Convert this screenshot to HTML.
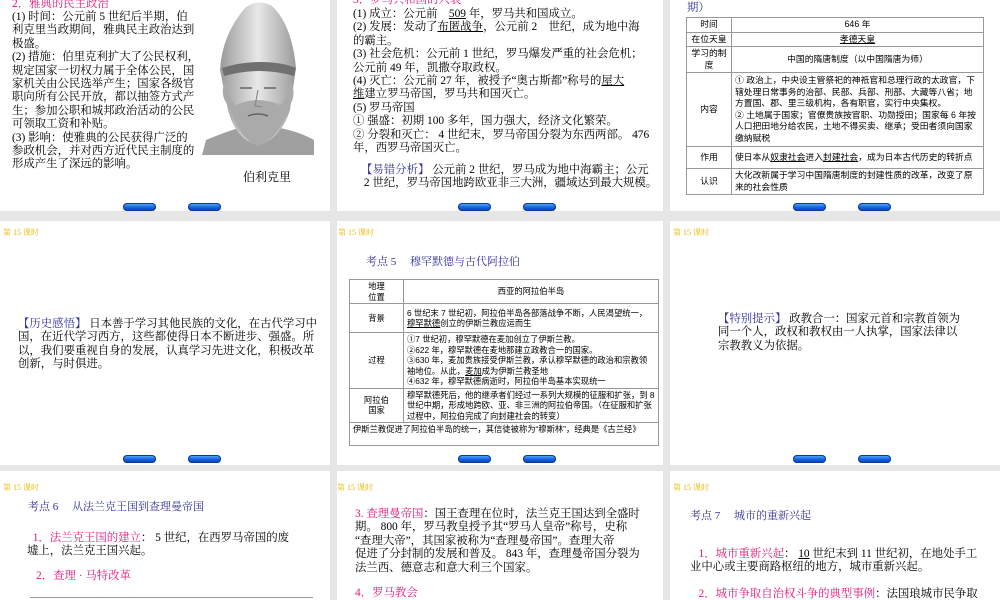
<!DOCTYPE html>
<html><head><meta charset="utf-8">
<style>
*{margin:0;padding:0;box-sizing:border-box}
body{width:1000px;height:600px;background:#e6e6e6;position:relative;overflow:hidden;font-family:"Liberation Serif","Noto Serif CJK SC",serif;color:#000}
.s{position:absolute;background:#fff;overflow:hidden}
.a{position:absolute;white-space:nowrap}
.t{font-size:11.4px;line-height:13.4px}
.pk{color:#e4187a}
.bl{color:#333399}
.hd{position:absolute;font-size:8px;color:#e8b400;font-family:"Liberation Serif","Noto Serif CJK SC",serif}
.btn{position:absolute;width:33px;height:8px;border-radius:5px;background:linear-gradient(#5fb6ff,#1560e0 55%,#0a3fb0);box-shadow:0 0 0 1px #0a3aa0 inset}
u{text-decoration:underline}
table{position:absolute;border-collapse:collapse;font-size:8.3px;line-height:10.5px;font-family:"Liberation Sans","Noto Sans CJK SC",sans-serif}
td{border:1px solid #999;padding:1px 3px;vertical-align:middle}
td.c{text-align:center}
</style></head><body>

<div class="s" style="left:0;top:0;width:330px;height:211px">
  <div class="a t pk" style="left:12px;top:-2px">2．雅典的民主政治</div>
  <div class="a t" style="left:12px;top:11px">(1) 时间：公元前 5 世纪后半期，伯<br>利克里当政期间，雅典民主政治达到<br>极盛。<br>(2) 措施：伯里克利扩大了公民权利，<br>规定国家一切权力属于全体公民，国<br>家机关由公民选举产生；国家各级官<br>职向所有公民开放，都以抽签方式产<br>生；参加公职和城邦政治活动的公民<br>可领取工资和补贴。<br>(3) 影响：使雅典的公民获得广泛的<br>参政机会，并对西方近代民主制度的<br>形成产生了深远的影响。</div>
  <svg class="a" style="left:200px;top:0" width="116" height="157" viewBox="0 0 116 157">
    <defs><linearGradient id="g" x1="0" x2="1"><stop offset="0" stop-color="#9a9a9a"/><stop offset=".5" stop-color="#e8e8e8"/><stop offset="1" stop-color="#9a9a9a"/></linearGradient></defs>
    <path d="M2 155 L6 140 Q30 130 40 128 L80 128 Q100 132 114 140 L114 155 Z" fill="#a0a0a0"/>
    <path d="M20 70 Q22 35 45 8 Q58 -2 72 6 Q92 25 96 68 L90 110 Q80 140 58 145 Q36 140 28 110 Z" fill="url(#g)"/>
    <path d="M22 68 Q40 62 60 62 Q82 62 96 68 L94 76 Q60 66 24 76 Z" fill="#707070"/>
    <path d="M26 80 Q18 95 30 108 Q40 140 58 146 Q78 140 88 108 Q98 95 90 80 Q88 100 80 105 Q58 95 36 105 Q28 100 26 80Z" fill="#aaa"/>
    <path d="M40 88 h12 M64 88 h12" stroke="#666" stroke-width="1.5"/>
    <path d="M58 90 L55 106 L62 107" stroke="#888" fill="none" stroke-width="1.2"/>
    <path d="M48 116 Q58 112 68 116" stroke="#666" fill="none" stroke-width="1.5"/>
  </svg>
  <div class="a t" style="left:243px;top:171px;font-size:12px">伯利克里</div>
  <div class="btn" style="left:123px;top:203px"></div><div class="btn" style="left:188px;top:203px"></div>
</div>

<div class="s" style="left:337px;top:0;width:326px;height:211px">
  <div class="a t pk" style="left:16px;top:-6px">3．罗马共和国的兴衰</div>
  <div class="a t" style="left:16px;top:8px">(1) 成立：公元前　<u>509</u> 年，罗马共和国成立。<br>(2) 发展：发动了<u>布匿战争</u>，公元前 2　世纪，成为地中海<br>的霸主。<br>(3) 社会危机：公元前 1 世纪，罗马爆发严重的社会危机；<br>公元前 49 年，凯撒夺取政权。<br>(4) 灭亡：公元前 27 年，被授予“奥古斯都”称号的<u>屋大</u><br><u>维</u>建立罗马帝国，罗马共和国灭亡。<br>(5) 罗马帝国<br>① 强盛：初期 100 多年，国力强大，经济文化繁荣。<br>② 分裂和灭亡： 4 世纪末，罗马帝国分裂为东西两部。 476<br>年，西罗马帝国灭亡。</div>
  <div class="a t" style="left:24px;top:164px"><span class="bl">【易错分析】</span> 公元前 2 世纪，罗马成为地中海霸主；公元<br>&nbsp;2 世纪，罗马帝国地跨欧亚非三大洲，疆域达到最大规模。</div>
  <div class="btn" style="left:121px;top:203px"></div><div class="btn" style="left:186px;top:203px"></div>
</div>

<div class="s" style="left:670px;top:0;width:330px;height:211px">
  <div class="a t bl" style="left:17px;top:2px">期）</div>
  <table style="left:16px;top:17px;width:298px;font-size:8.8px;line-height:11.5px">
    <tr style="height:10px"><td class="c" style="width:45px">时间</td><td class="c">646 年</td></tr>
    <tr><td class="c">在位天皇</td><td class="c"><u>孝德天皇</u></td></tr>
    <tr style="height:25px"><td class="c">学习的制度</td><td class="c">中国的隋唐制度（以中国隋唐为师）</td></tr>
    <tr style="height:74px"><td class="c">内容</td><td>① 政治上，中央设主管祭祀的神祇官和总理行政的太政官，下辖处理日常事务的治部、民部、兵部、刑部、大藏等八省；地方置国、郡、里三级机构，各有职官，实行中央集权。<br>② 土地属于国家；官僚贵族按官职、功勋授田；国家每 6 年按人口把田地分给农民，土地不得买卖、继承；受田者须向国家缴纳赋税</td></tr>
    <tr style="height:22px"><td class="c">作用</td><td>使日本从<u>奴隶社会</u>进入<u>封建社会</u>，成为日本古代历史的转折点</td></tr>
    <tr style="height:25px"><td class="c">认识</td><td>大化改新属于学习中国隋唐制度的封建性质的改革，改变了原来的社会性质</td></tr>
  </table>
  <div class="btn" style="left:123px;top:203px"></div><div class="btn" style="left:188px;top:203px"></div>
</div>

<div class="s" style="left:0;top:221px;width:330px;height:244px">
  <div class="hd" style="left:3px;top:6px">第 15 课时</div>
  <div class="a t" style="left:18px;top:97px"><span class="bl">【历史感悟】</span> 日本善于学习其他民族的文化，在古代学习中<br>国，在近代学习西方，这些都使得日本不断进步、强盛。所<br>以，我们要重视自身的发展，认真学习先进文化，积极改革<br>创新，与时俱进。</div>
  <div class="btn" style="left:123px;top:234px"></div><div class="btn" style="left:188px;top:234px"></div>
</div>

<div class="s" style="left:337px;top:221px;width:326px;height:244px">
  <div class="hd" style="left:1px;top:6px">第 15 课时</div>
  <div class="a bl" style="left:29px;top:32px;font-size:11px">考点 5　 穆罕默德与古代阿拉伯</div>
  <table style="left:12px;top:58px;width:310px">
    <tr style="height:24px"><td class="c" style="width:54px">地理<br>位置</td><td class="c">西亚的阿拉伯半岛</td></tr>
    <tr style="height:29px"><td class="c">背景</td><td>6 世纪末 7 世纪初，阿拉伯半岛各部落战争不断，人民渴望统一，<u>穆罕默德</u>创立的伊斯兰教应运而生</td></tr>
    <tr style="height:52px"><td class="c">过程</td><td>①7 世纪初，穆罕默德在麦加创立了伊斯兰教。<br>②622 年，穆罕默德在麦地那建立政教合一的国家。<br>③630 年，麦加贵族接受伊斯兰教，承认穆罕默德的政治和宗教领袖地位。从此，<u>麦加</u>成为伊斯兰教圣地<br>④632 年，穆罕默德病逝时，阿拉伯半岛基本实现统一</td></tr>
    <tr style="height:33px"><td class="c">阿拉伯<br>国家</td><td>穆罕默德死后，他的继承者们经过一系列大规模的征服和扩张，到 8 世纪中期，形成地跨欧、亚、非三洲的阿拉伯帝国。（在征服和扩张过程中，阿拉伯完成了向封建社会的转变）</td></tr>
    <tr style="height:23px"><td colspan="2" style="vertical-align:top">伊斯兰教促进了阿拉伯半岛的统一，其信徒被称为“穆斯林”，经典是《古兰经》</td></tr>
  </table>
  <div class="btn" style="left:121px;top:234px"></div><div class="btn" style="left:186px;top:234px"></div>
</div>

<div class="s" style="left:670px;top:221px;width:330px;height:244px">
  <div class="hd" style="left:3px;top:6px">第 15 课时</div>
  <div class="a t" style="left:48px;top:92px"><span class="bl">【特别提示】</span> 政教合一：国家元首和宗教首领为<br>同一个人，政权和教权由一人执掌，国家法律以<br>宗教教义为依据。</div>
  <div class="btn" style="left:123px;top:234px"></div><div class="btn" style="left:188px;top:234px"></div>
</div>

<div class="s" style="left:0;top:471px;width:330px;height:129px">
  <div class="hd" style="left:3px;top:11px">第 15 课时</div>
  <div class="a bl" style="left:28px;top:27px;font-size:11px">考点 6　 从法兰克王国到查理曼帝国</div>
  <div class="a t" style="left:27px;top:61px">&nbsp;&nbsp;<span class="pk">1．法兰克王国的建立</span>： 5 世纪，在西罗马帝国的废<br>墟上，法兰克王国兴起。</div>
  <div class="a t pk" style="left:36px;top:99px">2．查理 · 马特改革</div>
  <div class="a" style="left:30px;top:126px;width:283px;height:1px;background:#999"></div>
</div>

<div class="s" style="left:337px;top:471px;width:326px;height:129px">
  <div class="hd" style="left:0px;top:11px">第 15 课时</div>
  <div class="a t" style="left:18px;top:37px"><span class="pk">3. 查理曼帝国</span>：国王查理在位时，法兰克王国达到全盛时<br>期。 800 年，罗马教皇授予其“罗马人皇帝”称号，史称<br>“查理大帝”，其国家被称为“查理曼帝国”。查理大帝<br>促进了分封制的发展和普及。 843 年，查理曼帝国分裂为<br>法兰西、德意志和意大利三个国家。</div>
  <div class="a t pk" style="left:18px;top:116px">4．罗马教会</div>
</div>

<div class="s" style="left:670px;top:471px;width:330px;height:129px">
  <div class="hd" style="left:3px;top:11px">第 15 课时</div>
  <div class="a bl" style="left:20px;top:36px;font-size:11px">考点 7　 城市的重新兴起</div>
  <div class="a t" style="left:20px;top:77px">&nbsp;&nbsp;&nbsp;<span class="pk">1．城市重新兴起</span>： <u>10</u> 世纪末到 11 世纪初，在地处手工<br>业中心或主要商路枢纽的地方，城市重新兴起。</div>
  <div class="a t" style="left:20px;top:117px">&nbsp;&nbsp;&nbsp;<span class="pk">2．城市争取自治权斗争的典型事例</span>：法国琅城市民争取</div>
</div>

</body></html>
